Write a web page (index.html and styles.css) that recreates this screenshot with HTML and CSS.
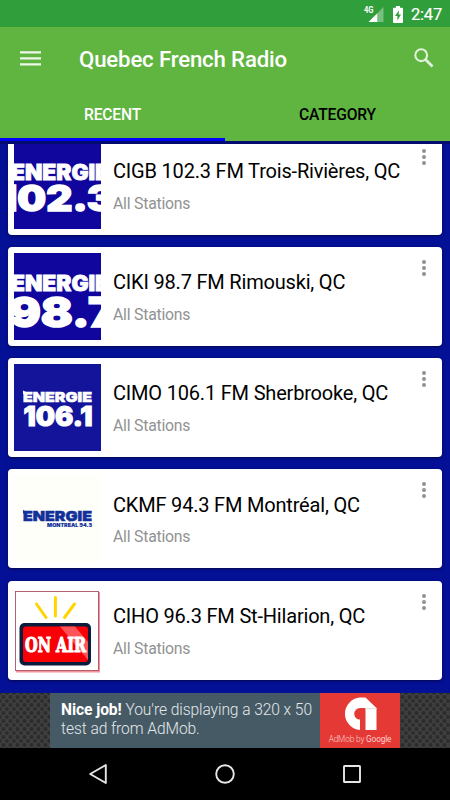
FILE: index.html
```html
<!DOCTYPE html>
<html lang="en">
<head>
    <meta charset="UTF-8">
    <meta name="viewport" content="width=device-width, initial-scale=1.0">
    <title>Quebec French Radio</title>
    <link rel="stylesheet" href="styles.css">
</head>
<body>
    <div class="status-bar">
        <svg class="signal" width="20" height="17" viewBox="0 0 20 17">
            <text x="0" y="7.4" class="network" textLength="9.5" lengthAdjust="spacingAndGlyphs">4G</text>
            <path d="M4.5 16 L13.3 7.2 V16Z" fill="#fff"/>
            <path d="M13.3 7.2 L19.5 1 V16 H13.3Z" fill="#fff" opacity=".35"/>
        </svg>
        <svg class="battery" width="10" height="17" viewBox="0 0 10 17">
            <path d="M3 0h4v1.7h2a1 1 0 0 1 1 1V16a1 1 0 0 1-1 1H1a1 1 0 0 1-1-1V2.7a1 1 0 0 1 1-1h2Z" fill="#fff"/>
            <path d="M6 4.3 2 10h2.4v4.4L8 8.5H5.7Z" fill="#319e3c"/>
        </svg>
        <span class="clock">2:47</span>
    </div>

    <header class="app-bar">
        <div class="toolbar">
            <svg class="menu" width="21" height="15" viewBox="0 0 21 15">
                <path d="M0 1.3h21M0 7.3h21M0 13.3h21" stroke="#eef7ea" stroke-width="2.2"/>
            </svg>
            <h1>Quebec French Radio</h1>
            <svg class="search" width="20" height="20" viewBox="0 0 20 20">
                <circle cx="7.2" cy="7.2" r="5.9" fill="none" stroke="#e3f2dd" stroke-width="2.1"/>
                <path d="M11.5 11.5 18.5 18.5" stroke="#e3f2dd" stroke-width="2.7"/>
            </svg>
        </div>
        <nav class="tabs">
            <a class="tab active">RECENT</a>
            <a class="tab">CATEGORY</a>
        </nav>
    </header>

    <main class="stations">
        <article class="card">
            <svg class="logo" viewBox="0 0 87 87">
                <rect width="87" height="87" fill="#10059c"/>
                <text class="brand light" x="-3" y="37.8" font-size="21" stroke-width=".8" textLength="98" lengthAdjust="spacingAndGlyphs">ENERGIE</text>
                <text class="brand light" x="-15" y="68.5" font-size="35" stroke-width="1.4" textLength="115" lengthAdjust="spacingAndGlyphs">102.3</text>
            </svg>
            <div class="info">
                <h2>CIGB 102.3 FM Trois-Rivières, QC</h2>
                <p>All Stations</p>
            </div>
            <div class="more"><i></i><i></i><i></i></div>
        </article>

        <article class="card">
            <svg class="logo" viewBox="0 0 87 87">
                <rect width="87" height="87" fill="#10059c"/>
                <text class="brand light" x="-3" y="37.5" font-size="21" stroke-width=".8" textLength="98" lengthAdjust="spacingAndGlyphs">ENERGIE</text>
                <text class="brand light" x="-5" y="73.7" font-size="41.5" stroke-width="1.6" textLength="107" lengthAdjust="spacingAndGlyphs">98.7</text>
            </svg>
            <div class="info">
                <h2>CIKI 98.7 FM Rimouski, QC</h2>
                <p>All Stations</p>
            </div>
            <div class="more"><i></i><i></i><i></i></div>
        </article>

        <article class="card">
            <svg class="logo" viewBox="0 0 87 87">
                <rect width="87" height="87" fill="#14149a"/>
                <path d="M9 26.5l3 1.5v2H9z" fill="#fff"/>
                <text class="brand light" x="9" y="38" font-size="13.5" stroke-width=".5" textLength="69" lengthAdjust="spacingAndGlyphs">ENERGIE</text>
                <text class="brand light" x="9.5" y="61.7" font-size="26.5" stroke-width="1.1" textLength="69" lengthAdjust="spacingAndGlyphs">106.1</text>
            </svg>
            <div class="info">
                <h2>CIMO 106.1 FM Sherbrooke, QC</h2>
                <p>All Stations</p>
            </div>
            <div class="more"><i></i><i></i><i></i></div>
        </article>

        <article class="card">
            <svg class="logo" viewBox="0 0 87 87">
                <rect width="87" height="87" fill="#fffffa"/>
                <path d="M9 35l3 1.5v2H9z" fill="#12309a"/>
                <text class="brand dark" x="9" y="46" font-size="13.5" stroke-width=".5" textLength="69" lengthAdjust="spacingAndGlyphs">ENERGIE</text>
                <text class="brand dark" x="33" y="52.2" font-size="5" stroke-width=".1" textLength="45" lengthAdjust="spacingAndGlyphs">MONTRÉAL 94.3</text>
            </svg>
            <div class="info">
                <h2>CKMF 94.3 FM Montréal, QC</h2>
                <p>All Stations</p>
            </div>
            <div class="more"><i></i><i></i><i></i></div>
        </article>

        <article class="card">
            <svg class="logo" viewBox="0 0 87 87">
                <rect width="87" height="87" fill="#fff"/>
                <path d="M85 5V84.5H2" fill="none" stroke="#f0929a" stroke-width="2"/>
                <rect x="1.5" y="4.5" width="83" height="79" fill="#fff" stroke="#b05060" stroke-width=".9"/>
                <path d="M22.5 17 32 30.5M41.4 10.5V29M60.5 17 50.5 30.5" stroke="#ffd400" stroke-width="3" stroke-linecap="round"/>
                <rect x="5.5" y="36" width="71.5" height="42.5" rx="5" fill="#0c1c3c"/>
                <rect x="9" y="39.5" width="65" height="35.5" rx="3" fill="#f90006"/>
                <path d="M46 39.5h15L74 55V73Z" fill="#ff5357"/>
                <text class="on-air" x="11" y="65" textLength="61" lengthAdjust="spacingAndGlyphs">ON AIR</text>
            </svg>
            <div class="info">
                <h2>CIHO 96.3 FM St-Hilarion, QC</h2>
                <p>All Stations</p>
            </div>
            <div class="more"><i></i><i></i><i></i></div>
        </article>
    </main>

    <div class="ad">
        <div class="ad-banner">
            <p class="ad-text"><b>Nice job!</b> You're displaying a 320 x 50<br>test ad from AdMob.</p>
            <div class="admob">
                <svg width="34" height="34" viewBox="0 0 34 34">
                    <path d="M17 33A16.3 16.3 0 0 1 17 .5H22.5L33.5 11V33H22.5V11H17A5.8 5.8 0 0 0 17 22.6Z" fill="#fff"/>
                    <path d="M22.5 11H33.5V12.2H22.5Z" fill="#e2e2e2"/>
                </svg>
                <span>AdMob by <b>Google</b></span>
            </div>
        </div>
    </div>

    <footer class="nav-bar">
        <svg width="20" height="22" viewBox="0 0 20 22">
            <path d="M16.8 2V20L1.2 11Z" fill="none" stroke="#e6e6e6" stroke-width="1.9" stroke-linejoin="round"/>
        </svg>
        <svg class="home" width="20" height="20" viewBox="0 0 20 20">
            <circle cx="10" cy="10" r="8.8" fill="none" stroke="#e6e6e6" stroke-width="1.9"/>
        </svg>
        <svg width="18" height="18" viewBox="0 0 18 18">
            <rect x="1" y="1" width="16" height="16" rx=".6" fill="none" stroke="#e6e6e6" stroke-width="1.9"/>
        </svg>
    </footer>
</body>
</html>
```
FILE: styles.css
```css
* {
    box-sizing: border-box;
}
body {
    margin: 0;
    width: 450px;
    height: 800px;
    display: flex;
    flex-direction: column;
    overflow: hidden;
    font-family: Roboto, sans-serif;
    background: #041096;
}
h1, h2, p {
    margin: 0;
    white-space: nowrap;
}
svg {
    display: block;
    flex: none;
}
.status-bar {
    height: 27px;
    padding: 1px 9px 0 0;
    display: flex;
    justify-content: flex-end;
    align-items: center;
    background: #319e3c;
    color: #fff;
}
.signal {
    overflow: visible;
}
.network {
    font-size: 9px;
    font-weight: 700;
    fill: #fff;
}
.battery {
    margin: 0 8px 0 9px;
}
.clock {
    font-size: 16.5px;
    font-weight: 400;
    -webkit-text-stroke: 0.2px #fff;
    width: 30px;
    letter-spacing: -0.2px;
}
.app-bar {
    height: 114px;
    background: #5fb540;
    color: #fff;
}
.toolbar {
    height: 63px;
    padding: 0 16px 0 20px;
    display: flex;
    align-items: center;
}
.menu {
    margin-top: -1px;
}
.search {
    margin-top: -2px;
}
.toolbar h1 {
    flex: 1;
    margin-left: 38px;
    font-size: 22.2px;
    font-weight: 500;
    letter-spacing: -0.15px;
}
.tabs {
    height: 51px;
    display: flex;
}
.tab {
    flex: 1;
    padding-top: 3px;
    line-height: 45px;
    font-size: 15.6px;
    font-weight: 500;
    letter-spacing: -0.15px;
    text-align: center;
    color: #000;
}
.tab.active {
    color: #fff;
    border-bottom: 3px solid #0000ff;
}
.stations {
    height: 552px;
    border-top: 3px solid #030b70;
    overflow: hidden;
    padding: 0 8px;
}
.card {
    height: 99px;
    margin-bottom: 12.3px;
    padding: 6px;
    display: flex;
    background: #fff;
    border-radius: 4px;
    box-shadow: 0 1px 3px rgba(0, 0, 0, 0.5);
}
.card:first-child {
    margin-top: -8.5px;
}
.logo {
    width: 87px;
    height: 87px;
}
.brand {
    font-family: Inter, sans-serif;
    font-weight: 900;
}
.light {
    fill: #fff;
    stroke: #fff;
}
.dark {
    fill: #12309a;
    stroke: #12309a;
}
.on-air {
    font-family: "DejaVu Serif", serif;
    font-size: 20px;
    font-weight: 700;
    fill: #fff;
    stroke: #fff;
    stroke-width: 1.2;
}
.info {
    flex: 1;
    padding: 17.4px 0 0 12px;
}
.info h2 {
    font-size: 20px;
    font-weight: 400;
    letter-spacing: -0.19px;
    line-height: 24px;
    color: #000;
}
.info p {
    margin-top: 11.7px;
    font-size: 15.8px;
    letter-spacing: -0.22px;
    line-height: 18px;
    color: #929292;
}
.more {
    width: 4px;
    margin: 7px 10px 0 0;
    display: flex;
    flex-direction: column;
    gap: 2px;
}
.more i {
    width: 4px;
    height: 4px;
    border-radius: 50%;
    background: #929292;
}
.ad {
    height: 55px;
    display: flex;
    justify-content: center;
    background-color: #404040;
    background-image: radial-gradient(circle, #2c2c2c 1.6px, transparent 2.4px), radial-gradient(circle, #2c2c2c 1.6px, transparent 2.4px);
    background-size: 7px 8px;
    background-position: 0 0, 3.5px 4px;
}
.ad-banner {
    width: 350px;
    display: flex;
    background: #465a65;
}
.ad-text {
    flex: 1;
    padding: 8px 0 0 11px;
    font-size: 15.6px;
    font-weight: 300;
    letter-spacing: -0.08px;
    line-height: 18.5px;
    color: #e3e8ea;
}
.ad-text b {
    font-weight: 700;
    color: #fff;
}
.admob {
    width: 80px;
    padding-top: 4px;
    display: flex;
    flex-direction: column;
    align-items: center;
    background: #e53935;
}
.admob span {
    margin-top: 3px;
    font-size: 8.3px;
    font-weight: 300;
    letter-spacing: -0.15px;
    line-height: 10px;
    color: #fbd0ce;
    white-space: nowrap;
}
.admob b {
    font-weight: 400;
}
.nav-bar {
    height: 52px;
    padding: 0 89px;
    display: flex;
    justify-content: space-between;
    align-items: center;
    background: #000;
}
.home {
    margin: 0 1px 0 -1px;
}
```
